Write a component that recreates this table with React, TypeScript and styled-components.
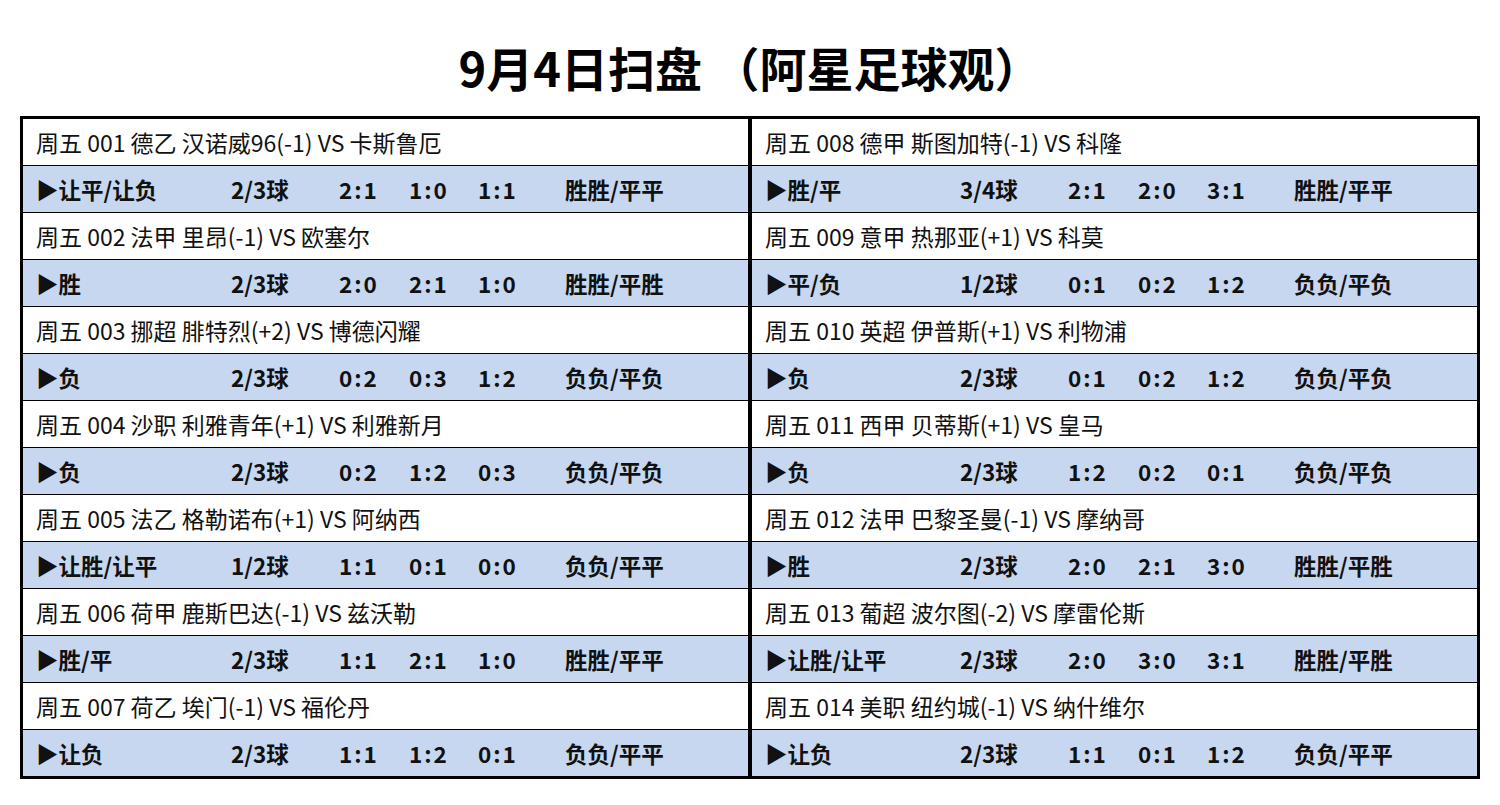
import styled, { createGlobalStyle } from "styled-components";

const GlobalStyle = createGlobalStyle`
  html, body {
    margin: 0;
    padding: 0;
    background: #ffffff;
  }
  body {
    font-family: "Noto Sans CJK SC", "Noto Sans", sans-serif;
    color: #111111;
  }
`;

type Match = {
  title: string;
  pick: string;
  goals: string;
  scores: [string, string, string];
  half: string;
};

const leftMatches: Match[] = [
  { title: "周五 001 德乙 汉诺威96(-1) VS 卡斯鲁厄", pick: "▶让平/让负", goals: "2/3球", scores: ["2:1", "1:0", "1:1"], half: "胜胜/平平" },
  { title: "周五 002 法甲 里昂(-1) VS 欧塞尔", pick: "▶胜", goals: "2/3球", scores: ["2:0", "2:1", "1:0"], half: "胜胜/平胜" },
  { title: "周五 003 挪超 腓特烈(+2) VS 博德闪耀", pick: "▶负", goals: "2/3球", scores: ["0:2", "0:3", "1:2"], half: "负负/平负" },
  { title: "周五 004 沙职 利雅青年(+1) VS 利雅新月", pick: "▶负", goals: "2/3球", scores: ["0:2", "1:2", "0:3"], half: "负负/平负" },
  { title: "周五 005 法乙 格勒诺布(+1) VS 阿纳西", pick: "▶让胜/让平", goals: "1/2球", scores: ["1:1", "0:1", "0:0"], half: "负负/平平" },
  { title: "周五 006 荷甲 鹿斯巴达(-1) VS 兹沃勒", pick: "▶胜/平", goals: "2/3球", scores: ["1:1", "2:1", "1:0"], half: "胜胜/平平" },
  { title: "周五 007 荷乙 埃门(-1) VS 福伦丹", pick: "▶让负", goals: "2/3球", scores: ["1:1", "1:2", "0:1"], half: "负负/平平" },
];

const rightMatches: Match[] = [
  { title: "周五 008 德甲 斯图加特(-1) VS 科隆", pick: "▶胜/平", goals: "3/4球", scores: ["2:1", "2:0", "3:1"], half: "胜胜/平平" },
  { title: "周五 009 意甲 热那亚(+1) VS 科莫", pick: "▶平/负", goals: "1/2球", scores: ["0:1", "0:2", "1:2"], half: "负负/平负" },
  { title: "周五 010 英超 伊普斯(+1) VS 利物浦", pick: "▶负", goals: "2/3球", scores: ["0:1", "0:2", "1:2"], half: "负负/平负" },
  { title: "周五 011 西甲 贝蒂斯(+1) VS 皇马", pick: "▶负", goals: "2/3球", scores: ["1:2", "0:2", "0:1"], half: "负负/平负" },
  { title: "周五 012 法甲 巴黎圣曼(-1) VS 摩纳哥", pick: "▶胜", goals: "2/3球", scores: ["2:0", "2:1", "3:0"], half: "胜胜/平胜" },
  { title: "周五 013 葡超 波尔图(-2) VS 摩雷伦斯", pick: "▶让胜/让平", goals: "2/3球", scores: ["2:0", "3:0", "3:1"], half: "胜胜/平胜" },
  { title: "周五 014 美职 纽约城(-1) VS 纳什维尔", pick: "▶让负", goals: "2/3球", scores: ["1:1", "0:1", "1:2"], half: "负负/平平" },
];

const Page = styled.div`
  width: 1500px;
  padding: 38px 20px 0;
  box-sizing: border-box;
`;

const Title = styled.h1`
  margin: 0 0 21px;
  height: 57px;
  line-height: 57px;
  font-size: 47px;
  font-weight: 700;
  text-align: center;
  color: #000000;
`;

const Table = styled.div`
  display: flex;
  border: 3px solid #000000;
  width: 1460px;
  box-sizing: border-box;
`;

const Column = styled.div<{ $divider?: boolean }>`
  display: flex;
  flex-direction: column;
  width: 725px;
  border-right: ${(p) => (p.$divider ? "4px solid #000000" : "none")};
`;

const MatchRow = styled.div<{ $first?: boolean }>`
  display: flex;
  align-items: center;
  height: 46px;
  padding-left: 13px;
  font-size: 23px;
  font-weight: 400;
  border-top: ${(p) => (p.$first ? "none" : "1px solid #000000")};
  background: #ffffff;
`;

const PickRow = styled.div`
  display: grid;
  grid-template-columns: 195px 108px 70px 69px 87px 1fr;
  align-items: center;
  height: 46px;
  padding-left: 13px;
  font-size: 22.5px;
  font-weight: 700;
  border-top: 1px solid #000000;
  background: #c6d7ef;
`;

const Cell = styled.span`
  white-space: nowrap;
`;

const Score = styled.span`
  white-space: nowrap;
  letter-spacing: 2px;
`;

const MatchColumn = ({ matches, divider }: { matches: Match[]; divider?: boolean }) => (
  <Column $divider={divider}>
    {matches.map((m, i) => (
      <div key={m.title}>
        <MatchRow $first={i === 0}>{m.title}</MatchRow>
        <PickRow>
          <Cell>{m.pick}</Cell>
          <Cell>{m.goals}</Cell>
          {m.scores.map((s, j) => (
            <Score key={j}>{s}</Score>
          ))}
          <Cell>{m.half}</Cell>
        </PickRow>
      </div>
    ))}
  </Column>
);

const App = () => (
  <>
    <GlobalStyle />
    <Page>
      <Title>9月4日扫盘 （阿星足球观）</Title>
      <Table>
        <MatchColumn matches={leftMatches} divider />
        <MatchColumn matches={rightMatches} />
      </Table>
    </Page>
  </>
);

export default App;
